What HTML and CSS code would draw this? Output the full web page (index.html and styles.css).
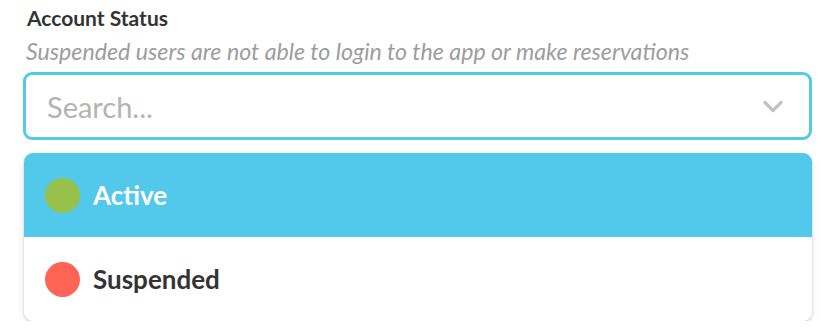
FILE: index.html
```html
<!DOCTYPE html>
<html>
<head>
<meta charset="utf-8">
<link rel="stylesheet" href="styles.css">
</head>
<body>
<div class="field">
  <div class="label">Account Status</div>
  <div class="hint">Suspended users are not able to login to the app or make reservations</div>
  <div class="select">
    <span class="placeholder">Search...</span>
    <svg class="chevron" width="20" height="13" viewBox="0 0 20 13"><path d="M2 2.5 L10 10.5 L18 2.5" fill="none" stroke="#c2c2c2" stroke-width="3.2" stroke-linecap="round" stroke-linejoin="round"/></svg>
  </div>
  <div class="menu">
    <div class="option active"><span class="dot green"></span><span class="opt-text">Active</span></div>
    <div class="option"><span class="dot red"></span><span class="opt-text">Suspended</span></div>
  </div>
</div>
</body>
</html>
```
FILE: styles.css
```css
* { box-sizing: border-box; }
body {
  margin: 0;
  background: #fff;
  font-family: Lato, "Noto Sans", sans-serif;
}
.field {
  padding: 4px 9px 0 23px;
}
.label {
  padding-left: 4px;
  font-size: 21px;
  font-weight: 700;
  color: #333;
  line-height: 28px;
}
.hint {
  padding-left: 3px;
  margin-top: 5px;
  font-size: 23.2px;
  font-style: italic;
  color: #9d9d9d;
  line-height: 28px;
  white-space: nowrap;
}
.select {
  margin-top: 7px;
  height: 68px;
  border: 3px solid #54c9eb;
  border-radius: 9px;
  display: flex;
  align-items: center;
  justify-content: space-between;
  padding: 0 26px 0 21px;
}
.placeholder {
  font-size: 29px;
  font-weight: 400;
  color: #b3b3b3;
}
.menu {
  margin-top: 13px;
  margin-left: 1px;
  border-radius: 9px;
  overflow: hidden;
  box-shadow: 0 1px 3px rgba(0,0,0,0.2), 0 3px 10px rgba(0,0,0,0.06);
}
.option {
  height: 84px;
  display: flex;
  align-items: center;
  padding-left: 21px;
  background: #fff;
}
.option.active {
  background: #52c9ea;
}
.dot {
  width: 35px;
  height: 35px;
  border-radius: 50%;
  flex: none;
}
.green { background: #97c14b; }
.red { background: #ff6455; }
.opt-text {
  margin-left: 13px;
  font-size: 26px;
  font-weight: 700;
  color: #333;
}
.option.active .opt-text { color: #fff; }
```
